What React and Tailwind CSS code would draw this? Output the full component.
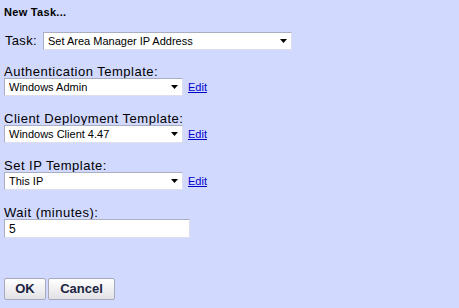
const font = { fontFamily: '"Liberation Sans", Arial, sans-serif' }

function Arrow() {
  return (
    <svg width="7" height="4" viewBox="0 0 7 4" className="shrink-0">
      <path d="M0 0h7L3.5 4z" fill="#000" />
    </svg>
  )
}

function FakeSelect({ value, width }) {
  return (
    <div
      className={`flex h-[18px] items-center justify-between bg-white border border-t-[#a9aec0] border-l-[#a9aec0] border-r-[#dde0ec] border-b-[#dde0ec] pl-[4px] pr-[4px] text-[11px] text-black ${width}`}
    >
      <span className="leading-none">{value}</span>
      <Arrow />
    </div>
  )
}

function Field({ label, value, className = '' }) {
  return (
    <div className={`flex flex-col ${className}`}>
      <div className="text-[13px] leading-[13px] tracking-[0.5px] text-black">{label}</div>
      <div className="flex items-center">
        <FakeSelect value={value} width="w-[179px]" />
        <a href="#" className="ml-[5px] text-[11px] leading-none text-[#0000cc] underline">
          Edit
        </a>
      </div>
    </div>
  )
}

function Button({ children, width }) {
  return (
    <button
      className={`h-[22px] ${width} rounded-[2px] border border-[#a6a9bb] bg-gradient-to-b from-white to-[#e2e2e6] text-[13px] font-bold text-[#1c2340]`}
    >
      {children}
    </button>
  )
}

export default function App() {
  return (
    <div className="min-h-screen w-full bg-[#d1d9ff] pl-[4px] pt-[6px]" style={font}>
      <div className="text-[11px] leading-[13px] font-bold tracking-[0.3px] text-black">New Task...</div>

      <div className="mt-[13px] flex items-center">
        <span className="ml-[1px] w-[38px] text-[13px] leading-[18px] tracking-[0.3px] text-black">Task:</span>
        <FakeSelect value="Set Area Manager IP Address" width="w-[249px]" />
      </div>

      <div className="mt-[15px] flex flex-col gap-[16px]">
        <Field label="Authentication Template:" value="Windows Admin" />
        <Field label="Client Deployment Template:" value="Windows Client 4.47" />
        <Field label="Set IP Template:" value="This IP" />
        <div className="flex flex-col">
          <div className="text-[13px] leading-[13px] tracking-[0.5px] text-black">Wait (minutes):</div>
          <div className="flex h-[19px] w-[186px] items-center bg-white border border-t-[#a9aec0] border-l-[#a9aec0] border-r-[#dde0ec] border-b-[#dde0ec] pl-[4px] text-[12px] text-black">
            5
          </div>
        </div>
      </div>

      <div className="mt-[40px] flex gap-[2px]">
        <Button width="w-[42px]">OK</Button>
        <Button width="w-[67px]">Cancel</Button>
      </div>
    </div>
  )
}
